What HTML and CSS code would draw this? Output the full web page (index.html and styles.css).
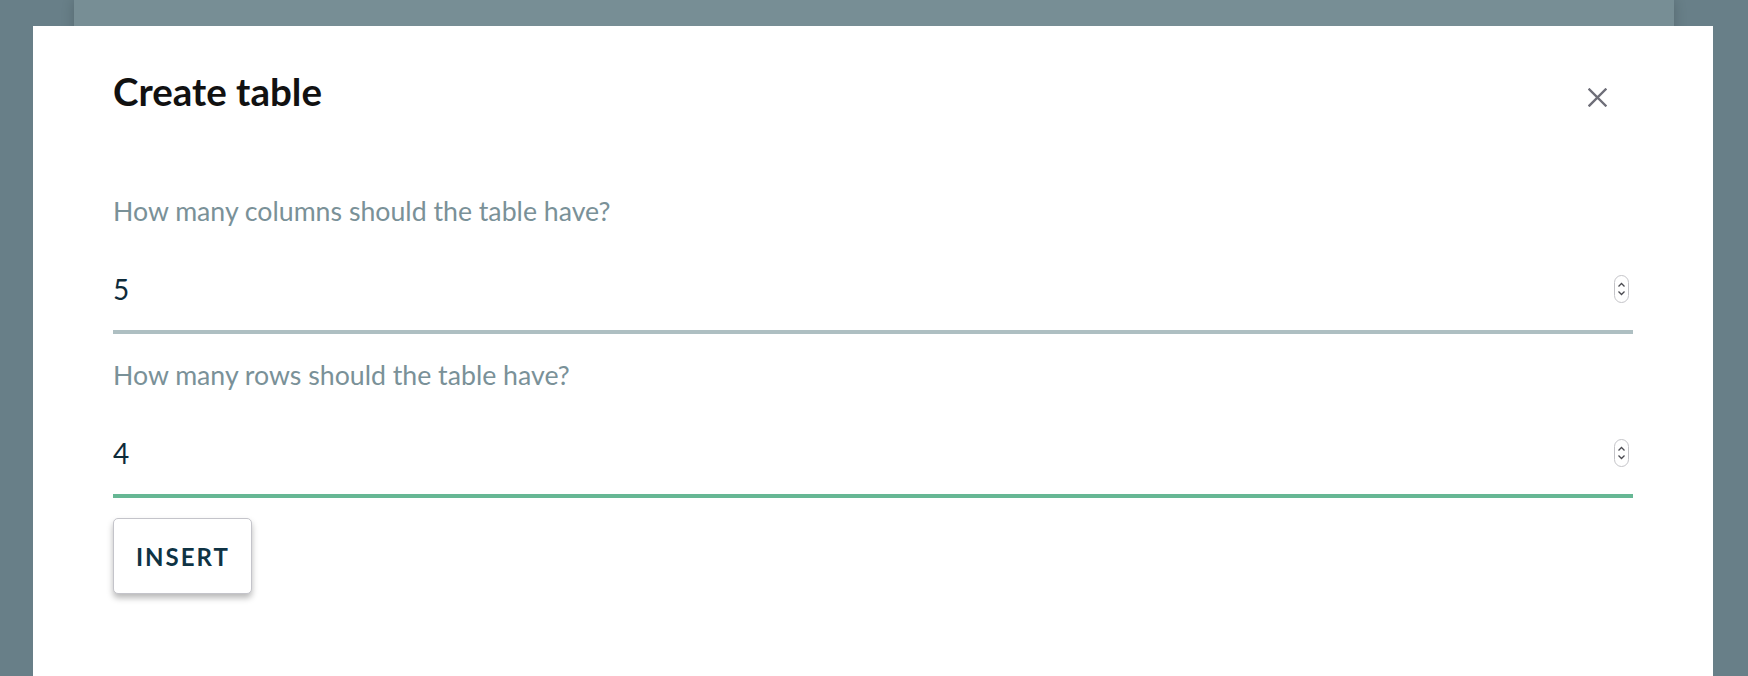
FILE: index.html
```html
<!doctype html>
<html lang="en-US">
  <head>
    <meta charset="utf-8">
    <meta name="viewport" content="width=device-width, initial-scale=1">
    <title>Create table</title>
    <link rel="stylesheet" href="styles.css">
  </head>
  <body>
    <div class="page"></div>
    <div class="modal">
      <div class="modal-head">
        <h2 class="modal-title">Create table</h2>
        <button class="close" type="button" aria-label="Close">
          <svg width="19" height="19" viewBox="0 0 19 19">
            <path d="M1.5 1.5 L17.5 17.5 M17.5 1.5 L1.5 17.5" stroke="#6e6e78" stroke-width="2.4" stroke-linecap="square" fill="none"/>
          </svg>
        </button>
      </div>
      <form class="form">
        <label class="field">
          <span class="field-label">How many columns should the table have?</span>
          <span class="field-box">
            <input class="field-input" type="number" value="5">
            <svg class="spin" width="15" height="28" viewBox="0 0 15 28">
              <rect x="0.5" y="0.5" width="14" height="27" rx="7" fill="#fff" stroke="#c4c4c8"/>
              <path d="M4.5 11.5 L7.5 8.5 L10.5 11.5 M4.5 16.5 L7.5 19.5 L10.5 16.5" stroke="#4a4a50" stroke-width="1.3" fill="none"/>
            </svg>
          </span>
        </label>
        <label class="field">
          <span class="field-label">How many rows should the table have?</span>
          <span class="field-box field-box--active">
            <input class="field-input" type="number" value="4">
            <svg class="spin" width="15" height="28" viewBox="0 0 15 28">
              <rect x="0.5" y="0.5" width="14" height="27" rx="7" fill="#fff" stroke="#c4c4c8"/>
              <path d="M4.5 11.5 L7.5 8.5 L10.5 11.5 M4.5 16.5 L7.5 19.5 L10.5 16.5" stroke="#4a4a50" stroke-width="1.3" fill="none"/>
            </svg>
          </span>
        </label>
        <div class="actions">
          <button class="btn" type="button">Insert</button>
        </div>
      </form>
    </div>
  </body>
</html>
```

FILE: styles.css
```css
body {
  background-color: #687f88;
  font-family: Lato, "Noto Sans", sans-serif;
  margin: 0;
  height: 100vh;
  overflow: hidden;
  padding: 0;
}
.page {
  background-color: #778e95;
  box-shadow: 0 0 12px rgba(0, 0, 0, 0.18);
  height: 100vh;
  margin: 0 auto;
  width: 1600px;
}
.modal {
  background-color: #fff;
  bottom: 0;
  box-sizing: border-box;
  left: 33px;
  overflow: hidden;
  padding: 41px 80px 0;
  position: absolute;
  top: 26px;
  width: 1680px;
}
.modal-head {
  align-items: flex-start;
  display: flex;
  justify-content: space-between;
}
.modal-title {
  color: #111;
  font-size: 38.5px;
  font-weight: 700;
  line-height: 48px;
  margin: 0;
}
.close {
  background: none;
  border: 0;
  cursor: pointer;
  display: flex;
  margin: 21px 26px 0 0;
  padding: 0;
}
.form {
  display: flex;
  flex-direction: column;
  gap: 25px;
  margin-top: 80px;
}
.field {
  display: flex;
  flex-direction: column;
}
.field-label {
  color: #7a9198;
  font-size: 26.7px;
  line-height: 32px;
  margin-bottom: 21px;
}
.field-box {
  align-items: center;
  border-bottom: 4px solid #aebfc2;
  display: flex;
}
.field-box--active {
  border-bottom-color: #66b794;
}
.field-input {
  appearance: textfield;
  background: transparent;
  border: 0;
  color: #0e2b3a;
  flex: 1;
  font-family: inherit;
  font-size: 28px;
  height: 82px;
  outline: none;
  padding: 0;
}
.field-input::-webkit-inner-spin-button,
.field-input::-webkit-outer-spin-button {
  -webkit-appearance: none;
  margin: 0;
}
.spin {
  margin-right: 4px;
}
.actions {
  display: flex;
  margin-top: -5px;
}
.btn {
  background-color: #fff;
  border: 1px solid #c4c4ca;
  border-radius: 5px;
  box-shadow: 0 4px 6px rgba(0, 0, 0, 0.28);
  color: #0f3344;
  cursor: pointer;
  font-family: inherit;
  font-size: 24px;
  font-weight: 700;
  height: 76px;
  letter-spacing: 2px;
  padding: 0 22px;
  text-transform: uppercase;
  width: 139px;
}
```
